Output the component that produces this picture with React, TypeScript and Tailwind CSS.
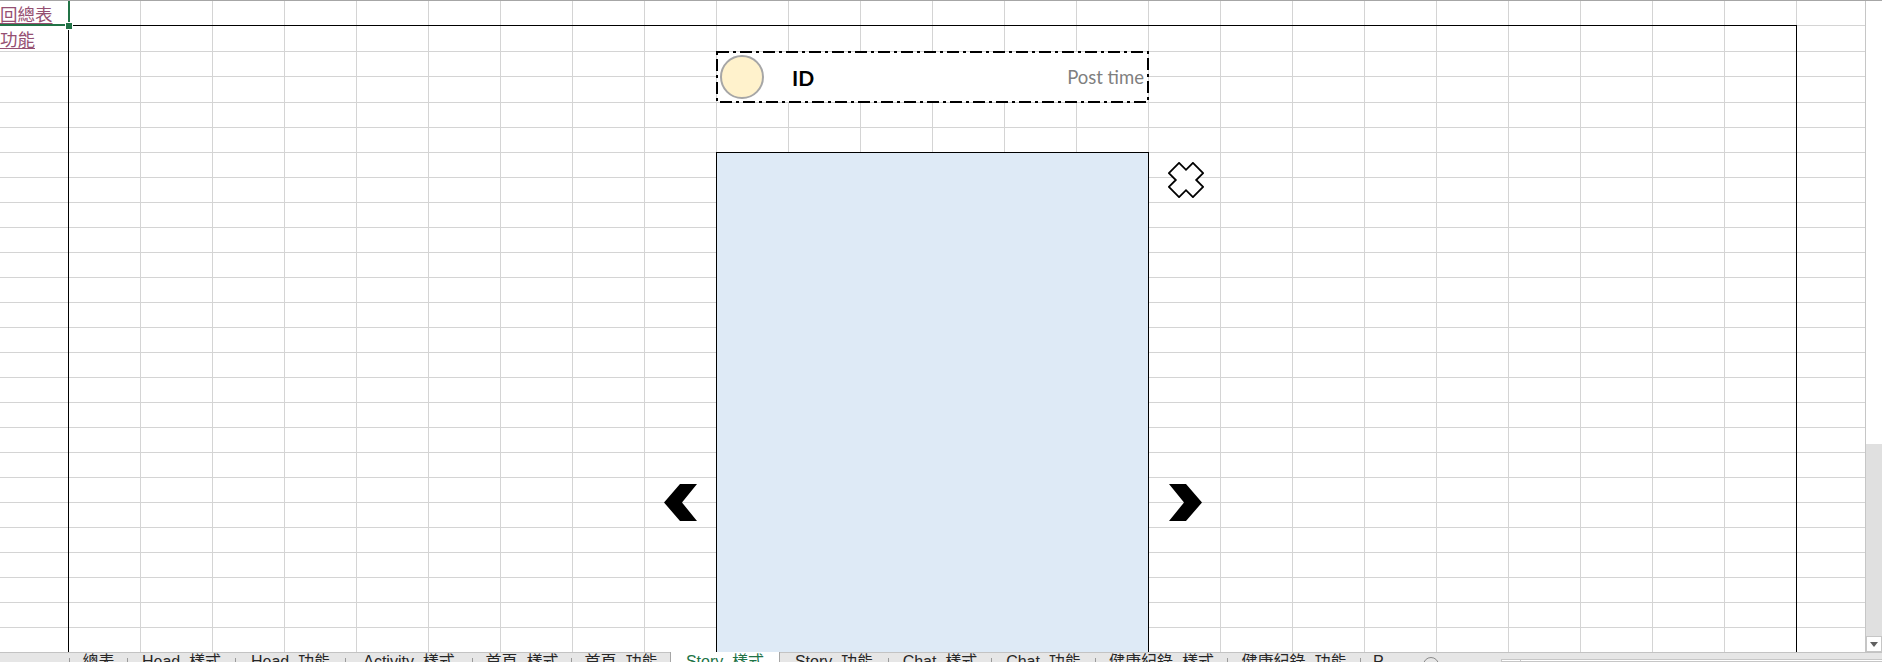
import React from "react";

const ROWS = 26;
const COLS = 26;

function XIcon() {
  const a = 7.2;
  const L = 17;
  const pts = [
    [-a, -L], [a, -L], [a, -a], [L, -a], [L, a], [a, a],
    [a, L], [-a, L], [-a, a], [-L, a], [-L, -a], [-a, -a],
  ]
    .map((p) => p.join(","))
    .join(" ");
  return (
    <svg width="36" height="36" viewBox="-18 -18 36 36">
      <polygon
        points={pts}
        transform="rotate(45)"
        fill="white"
        stroke="black"
        strokeWidth="1.8"
        strokeLinejoin="miter"
      />
    </svg>
  );
}

function ChevronLeft() {
  return (
    <svg width="34" height="37" viewBox="0 0 34 37">
      <polygon points="16,0 33,0 18,18.5 33,37 16,37 0,18.5" fill="black" />
    </svg>
  );
}

function ChevronRight() {
  return (
    <svg width="34" height="37" viewBox="0 0 34 37">
      <polygon points="0,0 17,0 33,18.5 17,37 0,37 15,18.5" fill="black" />
    </svg>
  );
}

function Cell({ r, c }: { r: number; c: number }) {
  let content: React.ReactNode = null;
  if (c === 0 && r === 0) content = "回總表";
  if (c === 0 && r === 1) content = "功能";
  return (
    <div className="border-r border-b border-[#d4d4d4] overflow-visible whitespace-nowrap">
      {content && (
        <div className="pt-[4px] text-[17.5px] leading-none text-[#954F72] underline underline-offset-[2px] font-['Noto_Sans_CJK_TC','Noto_Sans_CJK_SC',sans-serif]">
          {content}
        </div>
      )}
    </div>
  );
}

function Sep() {
  return <div className="w-px h-[4px] self-end bg-[#9a9a9a] shrink-0" />;
}

function Tab({ w, label, active }: { w: number; label: string; active?: boolean }) {
  if (active) {
    return (
      <div
        className="relative -mt-px h-[11px] shrink-0 bg-white border-x border-[#a6a6a6] flex justify-center overflow-hidden"
        style={{ width: w + 2 }}
      >
        <span className="pt-[2px] text-[16px] leading-none text-[#217346] whitespace-nowrap">{label}</span>
      </div>
    );
  }
  return (
    <div className="shrink-0 flex justify-center overflow-hidden" style={{ width: w }}>
      <span className="pt-[1px] text-[16px] leading-none text-[#262626] whitespace-nowrap">{label}</span>
    </div>
  );
}

function TabBar() {
  return (
    <div className="h-[10px] shrink-0 border-t border-[#c3c3c3] bg-[#e6e6e6] flex items-stretch font-['Liberation_Sans','Noto_Sans_CJK_TC',sans-serif]">
      <div className="w-[69px] shrink-0" />
      <Sep />
      <Tab w={57} label="總表" />
      <Sep />
      <Tab w={107} label="Head_樣式" />
      <Sep />
      <Tab w={109} label="Head_功能" />
      <Sep />
      <Tab w={126} label="Activity_樣式" />
      <Sep />
      <Tab w={98} label="首頁_樣式" />
      <Sep />
      <Tab w={98} label="首頁_功能" />
      <Tab w={108} label="Story_樣式" active />
      <Tab w={108} label="Story_功能" />
      <Sep />
      <Tab w={102} label="Chat_樣式" />
      <Sep />
      <Tab w={103} label="Chat_功能" />
      <Sep />
      <Tab w={131} label="健康紀錄_樣式" />
      <Sep />
      <Tab w={132} label="健康紀錄_功能" />
      <Sep />
      <div className="w-[30px] shrink-0 overflow-hidden pl-[12px]">
        <span className="pt-[1px] block text-[16px] leading-none text-[#262626]">P</span>
      </div>
      <div className="w-[80px] shrink-0 flex justify-center pt-[4px]">
        <div className="w-[16px] h-[16px] rounded-full border border-[#8a8a8a] shrink-0" />
      </div>
      <div className="w-[30px] shrink-0" />
      <div className="mt-[6px] w-[383px] shrink-0 border border-[#c6c6c6] bg-white flex">
        <div className="w-[19px] border-r border-[#c6c6c6]" />
      </div>
    </div>
  );
}

export default function App() {
  const cells: React.ReactNode[] = [];
  for (let r = 0; r < ROWS; r++) {
    for (let c = 0; c < COLS; c++) {
      cells.push(<Cell key={`${r}-${c}`} r={r} c={c} />);
    }
  }

  return (
    <div className="w-[1882px] h-[662px] overflow-hidden bg-white flex flex-col">
      <div className="h-px shrink-0 bg-[#a6a6a6]" />
      <div className="flex flex-1 min-h-0">
        <div className="relative flex-1 overflow-hidden">
          <div className="grid grid-cols-[69px_repeat(25,72px)] grid-rows-[25px_26px_25px_26px_repeat(22,25px)]">
            {cells}
          </div>

          {/* Outer black frame */}
          <div className="absolute left-[68px] top-[24px] w-[1729px] h-[700px] border border-black" />

          {/* Selected cell A1 */}
          <div className="absolute left-[-2px] top-[-3px] w-[72px] h-[28px] border-2 border-[#217346]" />
          <div className="absolute left-[65px] top-[21px] w-[8px] h-[8px] bg-[#217346] border border-white" />

          {/* Header card */}
          <div className="absolute left-[716px] top-[50px] w-[433px] h-[52px] flex items-center pl-[4px] pr-[5px]">
            <svg className="absolute inset-0" width="433" height="52" viewBox="0 0 433 52">
              <rect
                x="1"
                y="1"
                width="431"
                height="50"
                fill="white"
                stroke="black"
                strokeWidth="2"
                strokeDasharray="12 4 3 4"
              />
            </svg>
            <div className="relative w-[44px] h-[44px] rounded-full bg-[#FFF2CC] border-2 border-[#A6A6A6] shrink-0" />
            <div className="relative ml-[28px] text-[21px] font-bold leading-none text-black font-['Lato','Liberation_Sans',sans-serif]">
              ID
            </div>
            <div className="flex-1" />
            <div className="relative text-[18.5px] leading-none text-[#7f7f7f] font-['Lato','Liberation_Sans',sans-serif]">
              Post time
            </div>
          </div>

          {/* Story image area */}
          <div className="absolute left-[716px] top-[151px] w-[433px] h-[560px] bg-[#DEEAF6] border border-black" />

          {/* Close icon */}
          <div className="absolute left-[1168px] top-[161px]">
            <XIcon />
          </div>

          {/* Navigation chevrons */}
          <div className="absolute left-[664px] top-[483px]">
            <ChevronLeft />
          </div>
          <div className="absolute left-[1169px] top-[483px]">
            <ChevronRight />
          </div>
        </div>

        {/* Vertical scrollbar */}
        <div className="w-[17px] shrink-0 border-l border-[#c6c6c6] flex flex-col">
          <div className="h-[443px] bg-white" />
          <div className="flex-1 bg-[#e0e0e0]" />
          <div className="h-[16px] bg-white border border-[#c6c6c6] flex items-center justify-center">
            <svg width="8" height="5" viewBox="0 0 8 5">
              <polygon points="0,0 8,0 4,5" fill="#606060" />
            </svg>
          </div>
        </div>
      </div>
      <TabBar />
    </div>
  );
}
